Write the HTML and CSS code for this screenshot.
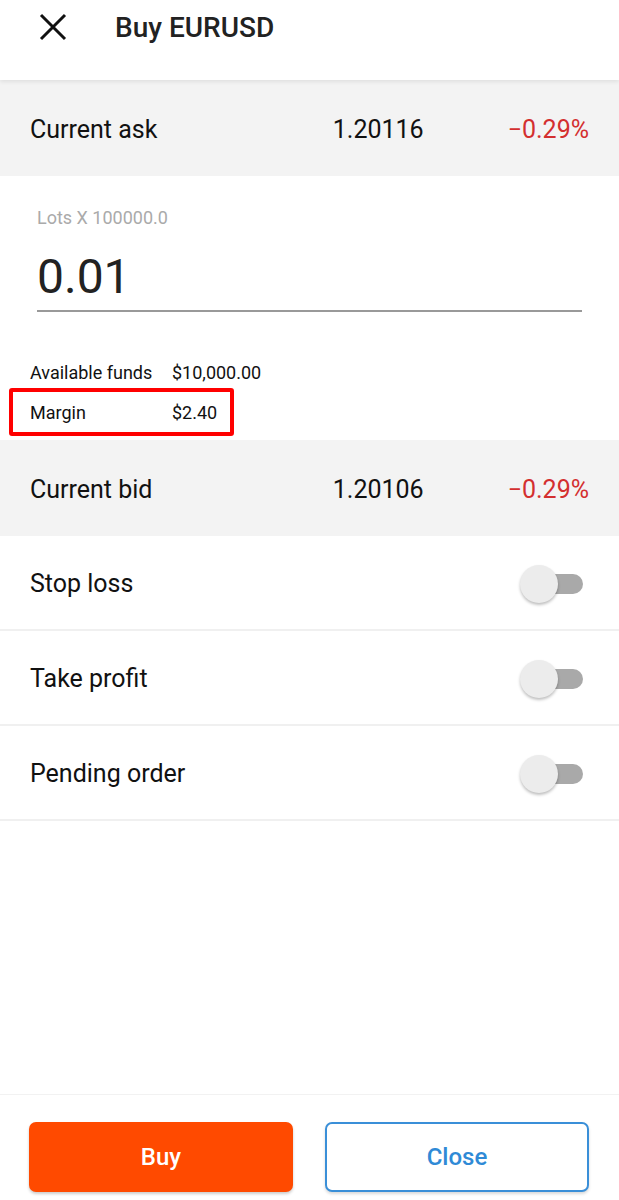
FILE: index.html
```html
<!DOCTYPE html>
<html lang="en">

<head>
  <meta charset="UTF-8">
  <meta name="viewport" content="width=device-width, initial-scale=1.0">
  <title>Buy EURUSD</title>
  <link rel="stylesheet" href="styles.css">
</head>

<body>
  <div class="screen">
    <header class="top-bar">
      <svg class="close-icon" width="28" height="28" viewBox="0 0 28 28">
        <path d="M2 2L26 26M26 2L2 26" stroke="#111" stroke-width="3" fill="none"/>
      </svg>
      <h1 class="title">Buy EURUSD</h1>
    </header>

    <div class="quote-row">
      <span class="quote-label">Current ask</span>
      <span class="quote-price">1.20116</span>
      <span class="quote-change">−0.29%</span>
    </div>

    <section class="order-form">
      <label class="lots-label">Lots X 100000.0</label>
      <div class="lots-input">0.01</div>

      <div class="funds">
        <div class="funds-line">
          <span class="funds-key">Available funds</span>
          <span>$10,000.00</span>
        </div>
        <div class="funds-line funds-line--marked">
          <span class="funds-key">Margin</span>
          <span>$2.40</span>
        </div>
      </div>
    </section>

    <div class="quote-row">
      <span class="quote-label">Current bid</span>
      <span class="quote-price">1.20106</span>
      <span class="quote-change">−0.29%</span>
    </div>

    <div class="option-row">
      <span>Stop loss</span>
      <span class="switch"><span class="switch-thumb"></span></span>
    </div>
    <div class="option-row">
      <span>Take profit</span>
      <span class="switch"><span class="switch-thumb"></span></span>
    </div>
    <div class="option-row">
      <span>Pending order</span>
      <span class="switch"><span class="switch-thumb"></span></span>
    </div>

    <div class="spacer"></div>

    <footer class="actions">
      <button class="btn btn-buy">Buy</button>
      <button class="btn btn-close">Close</button>
    </footer>
  </div>
</body>

</html>
```

FILE: styles.css
```css
* {
  box-sizing: border-box;
}

body {
  margin: 0;
  background: #fff;
  font-family: Roboto, "Noto Sans", "Liberation Sans", sans-serif;
  color: #111;
}

.screen {
  display: flex;
  flex-direction: column;
  height: 1200px;
}

.top-bar {
  display: flex;
  align-items: center;
  height: 80px;
  padding: 0 0 26px 39px;
  box-shadow: 0 2px 4px rgba(0, 0, 0, 0.08);
  position: relative;
  z-index: 1;
}

.close-icon {
  display: block;
}

.title {
  margin: 0 0 0 48px;
  font-size: 28px;
  font-weight: 500;
  color: #222;
}

.quote-row {
  display: flex;
  align-items: center;
  height: 96px;
  padding: 3px 30px 0;
  background: #f3f3f3;
  font-size: 25px;
}

.quote-label {
  flex: 1;
}

.quote-price {
  margin-right: 84px;
}

.quote-change {
  color: #d32f2f;
}

.order-form {
  padding: 31px 0 4px;
}

.lots-label {
  display: block;
  height: 21px;
  line-height: 21px;
  margin-left: 37px;
  font-size: 18px;
  color: #aaa;
}

.lots-input {
  margin: 21px 37px 0;
  padding-bottom: 5px;
  line-height: 56px;
  font-size: 48px;
  color: #222;
  border-bottom: 2px solid #999;
}

.funds {
  margin-top: 44px;
  font-size: 18px;
}

.funds-line {
  display: flex;
  align-items: center;
  height: 32px;
  padding-left: 30px;
}

.funds-key {
  width: 142px;
}

.funds-line--marked {
  width: 225px;
  height: 48px;
  margin-left: 9px;
  padding-left: 17px;
  border: 4px solid #ff0000;
  border-radius: 3px;
}

.option-row {
  display: flex;
  align-items: center;
  justify-content: space-between;
  height: 95px;
  padding: 2px 36px 0 30px;
  font-size: 25px;
  border-bottom: 2px solid #f0f0f0;
}

.switch {
  position: relative;
  width: 48px;
  height: 20px;
  border-radius: 10px;
  background: #a9a9a9;
}

.switch-thumb {
  position: absolute;
  left: -15px;
  top: -9px;
  width: 38px;
  height: 38px;
  border-radius: 50%;
  background: #ececec;
  box-shadow: 0 2px 3px rgba(0, 0, 0, 0.25);
}

.spacer {
  flex: 1;
  border-bottom: 1px solid #f2f2f2;
}

.actions {
  display: flex;
  gap: 32px;
  padding: 27px 0 8px 29px;
}

.btn {
  flex: 0 0 264px;
  height: 70px;
  border-radius: 7px;
  font-family: inherit;
  font-size: 24px;
  font-weight: 500;
}

.btn-buy {
  background: #ff4a00;
  color: #fff;
  border: none;
  box-shadow: 0 2px 3px rgba(0, 0, 0, 0.2);
}

.btn-close {
  background: #fff;
  color: #2f8ad6;
  border: 2px solid #3a8fd8;
  box-shadow: 0 2px 3px rgba(0, 0, 0, 0.15);
}
```
